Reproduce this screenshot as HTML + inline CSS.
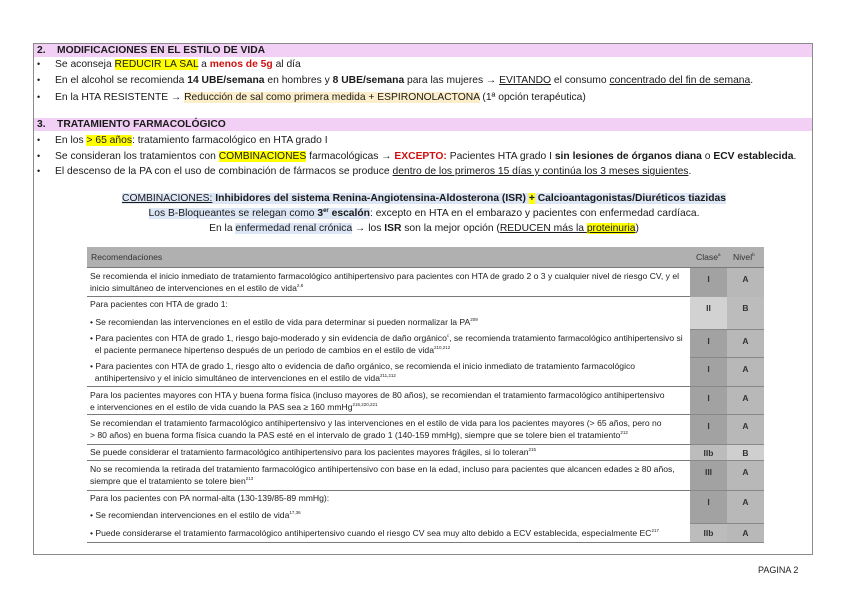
<!DOCTYPE html>
<html><head><meta charset="utf-8"><style>
*{margin:0;padding:0;box-sizing:border-box}
body{width:848px;height:599px;background:#fff;position:relative;overflow:hidden;font-family:"Liberation Sans",sans-serif;color:#1a1a1a}
.frame{position:absolute;left:33px;top:43px;width:780px;height:512px;border:1px solid #8a8a8a}
.bar{position:absolute;left:34px;width:778px;height:13px;background:#f2cff5}
.l{position:absolute;left:55px;font-size:10.3px;white-space:nowrap;line-height:13px}
.b{position:absolute;left:37px;font-size:9px;line-height:13px}
.h{font-weight:bold}
.y{background:#ffff00}
.o{background:#fdeecb}
.r{color:#d01010;font-weight:bold}
u{text-decoration:underline}
.c{position:absolute;left:0;width:848px;text-align:center;font-size:10.3px;line-height:13px;white-space:nowrap}
.bl{background:#dde6f5}
sup{font-size:4.5px;line-height:0;vertical-align:4px}
.t{position:absolute;font-family:"Liberation Sans Narrow","Liberation Sans",sans-serif;font-size:8.6px;color:#222;line-height:11.5px;white-space:nowrap}
.row{position:absolute;left:87px;width:677px;border-bottom:1px solid #7a7a7a}
.cl{position:absolute;left:690px;width:37px;text-align:center;font-family:"Liberation Sans Narrow","Liberation Sans",sans-serif;font-size:8.5px;font-weight:bold;color:#333;padding-top:6px}
.nv{position:absolute;left:727px;width:37px;text-align:center;font-family:"Liberation Sans Narrow","Liberation Sans",sans-serif;font-size:8.5px;font-weight:bold;color:#333;padding-top:6px}
</style></head><body>
<div class="frame"></div>
<div class="bar" style="top:44px"></div>
<div class="bar" style="top:118px"></div>

<div class="l h" style="left:37px;top:44px">2.&nbsp;&nbsp;&nbsp;&nbsp;MODIFICACIONES EN EL ESTILO DE VIDA</div>
<div class="b" style="top:58px">•</div><div class="l" style="top:58px">Se aconseja <span class="y">REDUCIR LA SAL</span> a <span class="r">menos de 5g</span> al día</div>
<div class="b" style="top:74px">•</div><div class="l" style="top:74px">En el alcohol se recomienda <b>14 UBE/semana</b> en hombres y <b>8 UBE/semana</b> para las mujeres → <u>EVITANDO</u> el consumo <u>concentrado del fin de semana</u>.</div>
<div class="b" style="top:91px">•</div><div class="l" style="top:91px">En la HTA RESISTENTE → <span class="o">Reducción de sal como primera medida + ESPIRONOLACTONA</span> (1ª opción terapéutica)</div>

<div class="l h" style="left:37px;top:118px">3.&nbsp;&nbsp;&nbsp;&nbsp;TRATAMIENTO FARMACOLÓGICO</div>
<div class="b" style="top:134px">•</div><div class="l" style="top:134px">En los <span class="y">&gt; 65 años</span>: tratamiento farmacológico en HTA grado I</div>
<div class="b" style="top:150px">•</div><div class="l" style="top:150px">Se consideran los tratamientos con <span class="y">COMBINACIONES</span> farmacológicas → <span class="r">EXCEPTO:</span> Pacientes HTA grado I <b>sin lesiones de órganos diana</b> o <b>ECV establecida</b>.</div>
<div class="b" style="top:165px">•</div><div class="l" style="top:165px">El descenso de la PA con el uso de combinación de fármacos se produce <u>dentro de los primeros 15 días y continúa los 3 meses siguientes</u>.</div>

<div class="c" style="top:192px"><span class="bl"><u>COMBINACIONES:</u> <b>Inhibidores del sistema Renina-Angiotensina-Aldosterona (ISR) <span class="y">+</span> Calcioantagonistas/Diuréticos tiazidas</b></span></div>
<div class="c" style="top:207px"><span class="bl">Los B-Bloqueantes se relegan como <b>3<sup style="font-size:6px">er</sup> escalón</b></span>: excepto en HTA en el embarazo y pacientes con enfermedad cardíaca.</div>
<div class="c" style="top:222px">En la <span class="bl">enfermedad renal crónica</span> → los <b>ISR</b> son la mejor opción (<u>REDUCEN más la <span class="y">proteinuria</span></u>)</div>

<!-- table -->
<div style="position:absolute;left:87px;top:247px;width:677px;height:21px;background:#b0b0b0;border-bottom:1px solid #7a7a7a"></div>
<div class="t" style="left:91px;top:252px;color:#333">Recomendaciones</div>
<div class="t" style="left:696px;top:252px;color:#333">Clase<sup>a</sup></div>
<div class="t" style="left:733px;top:252px;color:#333">Nivel<sup>b</sup></div>

<div class="row" style="top:268px;height:29px"></div>
<div class="row" style="top:297px;height:90px"></div>
<div class="row" style="top:387px;height:28px"></div>
<div class="row" style="top:415px;height:30px"></div>
<div class="row" style="top:445px;height:16px"></div>
<div class="row" style="top:461px;height:30px"></div>
<div class="row" style="top:491px;height:52px"></div>

<div class="cl" style="top:268px;height:29px;background:#a2a2a2">I</div><div class="nv" style="top:268px;height:29px;background:#b8b8b8">A</div>
<div class="cl" style="top:297px;height:33px;background:#d2d2d2;border-bottom:1px solid #888">II</div><div class="nv" style="top:297px;height:33px;background:#bcbcbc;border-bottom:1px solid #888">B</div>
<div class="cl" style="top:330px;height:28px;background:#a2a2a2;border-bottom:1px solid #888">I</div><div class="nv" style="top:330px;height:28px;background:#b8b8b8;border-bottom:1px solid #888">A</div>
<div class="cl" style="top:358px;height:29px;background:#a2a2a2;border-bottom:1px solid #888">I</div><div class="nv" style="top:358px;height:29px;background:#b8b8b8;border-bottom:1px solid #888">A</div>
<div class="cl" style="top:387px;height:28px;background:#a2a2a2;border-bottom:1px solid #888">I</div><div class="nv" style="top:387px;height:28px;background:#b8b8b8;border-bottom:1px solid #888">A</div>
<div class="cl" style="top:415px;height:30px;background:#a2a2a2;border-bottom:1px solid #888">I</div><div class="nv" style="top:415px;height:30px;background:#b8b8b8;border-bottom:1px solid #888">A</div>
<div class="cl" style="top:445px;height:16px;background:#bcbcbc;border-bottom:1px solid #888;padding-top:3px">IIb</div><div class="nv" style="top:445px;height:16px;background:#cfcfcf;border-bottom:1px solid #888;padding-top:3px">B</div>
<div class="cl" style="top:461px;height:30px;background:#a2a2a2;border-bottom:1px solid #888">III</div><div class="nv" style="top:461px;height:30px;background:#b8b8b8;border-bottom:1px solid #888">A</div>
<div class="cl" style="top:491px;height:33px;background:#a2a2a2;border-bottom:1px solid #888">I</div><div class="nv" style="top:491px;height:33px;background:#b8b8b8;border-bottom:1px solid #888">A</div>
<div class="cl" style="top:524px;height:19px;background:#bcbcbc;border-bottom:1px solid #888;padding-top:4px">IIb</div><div class="nv" style="top:524px;height:19px;background:#b8b8b8;border-bottom:1px solid #888;padding-top:4px">A</div>

<div class="t" style="left:90px;top:271px">Se recomienda el inicio inmediato de tratamiento farmacológico antihipertensivo para pacientes con HTA de grado 2 o 3 y cualquier nivel de riesgo CV, y el<br>inicio simultáneo de intervenciones en el estilo de vida<sup>2,8</sup></div>
<div class="t" style="left:90px;top:299px">Para pacientes con HTA de grado 1:</div>
<div class="t" style="left:90px;top:317px">• Se recomiendan las intervenciones en el estilo de vida para determinar si pueden normalizar la PA<sup>209</sup></div>
<div class="t" style="left:90px;top:333px">• Para pacientes con HTA de grado 1, riesgo bajo-moderado y sin evidencia de daño orgánico<sup>c</sup>, se recomienda tratamiento farmacológico antihipertensivo si<br>&nbsp;&nbsp;el paciente permanece hipertenso después de un periodo de cambios en el estilo de vida<sup>210,212</sup></div>
<div class="t" style="left:90px;top:361px">• Para pacientes con HTA de grado 1, riesgo alto o evidencia de daño orgánico, se recomienda el inicio inmediato de tratamiento farmacológico<br>&nbsp;&nbsp;antihipertensivo y el inicio simultáneo de intervenciones en el estilo de vida<sup>211,212</sup></div>
<div class="t" style="left:90px;top:390px">Para los pacientes mayores con HTA y buena forma física (incluso mayores de 80 años), se recomiendan el tratamiento farmacológico antihipertensivo<br>e intervenciones en el estilo de vida cuando la PAS sea ≥ 160 mmHg<sup>216,220,221</sup></div>
<div class="t" style="left:90px;top:418px">Se recomiendan el tratamiento farmacológico antihipertensivo y las intervenciones en el estilo de vida para los pacientes mayores (&gt; 65 años, pero no<br>&gt; 80 años) en buena forma física cuando la PAS esté en el intervalo de grado 1 (140-159 mmHg), siempre que se tolere bien el tratamiento<sup>212</sup></div>
<div class="t" style="left:90px;top:447px">Se puede considerar el tratamiento farmacológico antihipertensivo para los pacientes mayores frágiles, si lo toleran<sup>215</sup></div>
<div class="t" style="left:90px;top:464px">No se recomienda la retirada del tratamiento farmacológico antihipertensivo con base en la edad, incluso para pacientes que alcancen edades ≥ 80 años,<br>siempre que el tratamiento se tolere bien<sup>213</sup></div>
<div class="t" style="left:90px;top:493px">Para los pacientes con PA normal-alta (130-139/85-89 mmHg):</div>
<div class="t" style="left:90px;top:510px">• Se recomiendan intervenciones en el estilo de vida<sup>17,36</sup></div>
<div class="t" style="left:90px;top:528px">• Puede considerarse el tratamiento farmacológico antihipertensivo cuando el riesgo CV sea muy alto debido a ECV establecida, especialmente EC<sup>217</sup></div>

<div style="position:absolute;left:758px;top:565px;font-size:9px;color:#222">PAGINA 2</div>
</body></html>
